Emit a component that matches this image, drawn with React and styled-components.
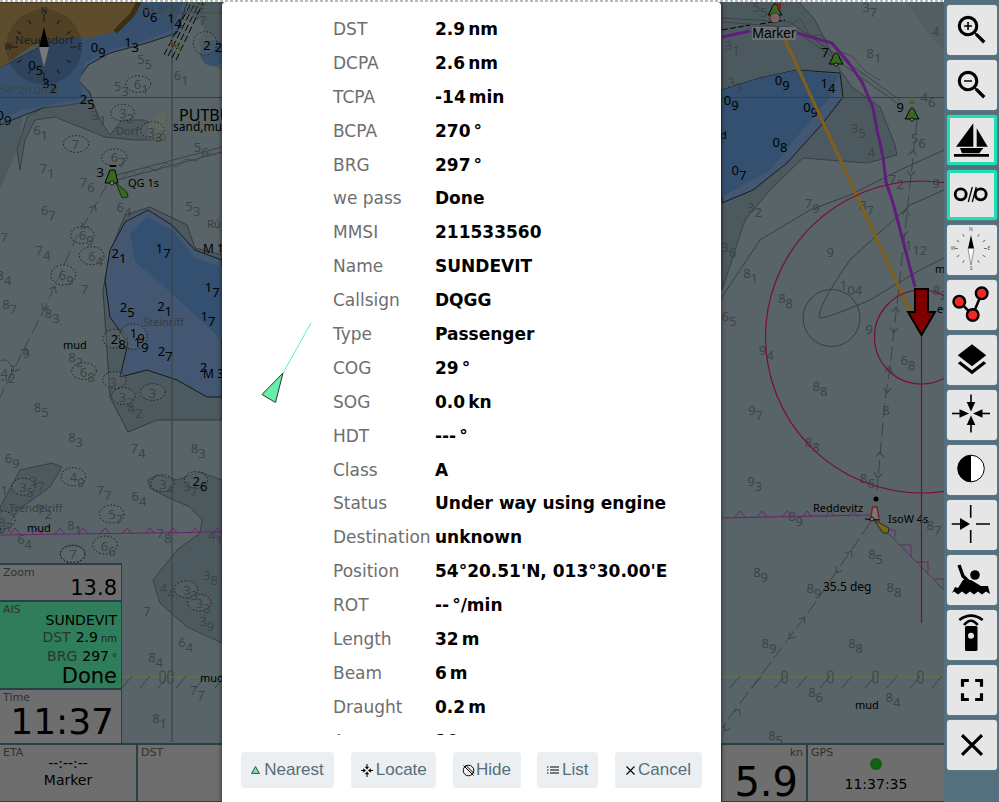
import React from 'react';
import styled, { createGlobalStyle } from 'styled-components';
import { MdZoomIn, MdZoomOut, MdLayers, MdFullscreen, MdClose } from 'react-icons/md';

const Global = createGlobalStyle`
  html, body { margin: 0; padding: 0; background: #54707f; overflow: hidden; }
  #root { width: 999px; height: 802px; }
`;

const Page = styled.div`
  width: 999px; height: 802px; display: flex; overflow: hidden;
  font-family: "DejaVu Sans", sans-serif;
`;
const MapArea = styled.div`
  position: relative; width: 944px; height: 802px; flex: none;
  display: flex; flex-direction: column; justify-content: flex-end; overflow: hidden;
`;
const ChartSvg = styled.svg`
  position: absolute; inset: 0; width: 944px; height: 802px;
  background: #b0c8ce;
`;
const TopStrip = styled.div`
  position: absolute; left: 0; right: 0; top: 0; height: 2px;
  background: repeating-linear-gradient(90deg, #bbb 0 3px, #fff 3px 5px);
  z-index: 3;
`;
const Widgets = styled.div`
  position: relative; display: flex; flex-direction: column; align-items: flex-start;
`;
const LeftStack = styled.div`
  width: 122px; box-sizing: border-box; padding: 2px 1px 0 0; background: #587c90;
  display: flex; flex-direction: column; gap: 2px;
`;
const Widget = styled.div`
  position: relative; box-sizing: border-box; height: ${p => p.$h}px;
  background: ${p => p.$ais ? '#5ffab4' : '#dcdcdc'}; color: #000;
  display: flex; flex-direction: column; align-items: flex-end; padding: 0 4px 0 3px;
  overflow: hidden;
`;
const Caption = styled.div`
  align-self: ${p => p.$right ? 'flex-end' : 'flex-start'}; font-size: 11px; line-height: 13px; color: #5e6666; padding-top: 1px; flex: none;
`;
const BigValue = styled.div`
  font-size: ${p => p.$size}px; line-height: ${p => p.$lh || p.$size}px; white-space: nowrap; flex: none;
  padding-right: ${p => p.$pr || 0}px; margin-top: ${p => p.$mt || 0}px;
`;
const AisName = styled.div`font-size: 14px; line-height: 18px; margin-top: -5px; flex: none;`;
const AisLine = styled.div`font-size: 14px; line-height: 17.5px; color: #4f6e60; white-space: nowrap; flex: none;`;
const AisValue = styled.span`color: #000; margin-left: 5px;`;
const AisUnit = styled.span`font-size: 10px; margin-left: 3px; color: #3d4a45;`;
const BottomBar = styled.div`
  display: flex; width: 944px; height: 59px; box-sizing: border-box; gap: 2px;
  padding: 2px 0 1px 0; background: #587c90;
`;
const BarCell = styled.div`
  position: relative; width: ${p => p.$w}px; flex: ${p => p.$grow ? 1 : 'none'}; box-sizing: border-box;
  background: #dcdcdc; color: #000; display: flex; flex-direction: column;
  align-items: ${p => p.$end ? 'flex-end' : 'center'}; padding: 0 3px;
  overflow: hidden;
`;
const CellText = styled.div`font-size: 14px; line-height: 17px; white-space: nowrap; flex: none; margin-top: ${p => p.$mt || 0}px;`;
const GpsDot = styled.div`
  width: 12px; height: 12px; border-radius: 50%; margin: -1px 0 6px; flex: none;
  background: radial-gradient(circle, #1dc62d 0 40%, #16a322 100%);
`;
const Dim = styled.div`
  position: absolute; inset: 0; background: rgba(0,0,0,.5); z-index: 2;
  display: flex; justify-content: center; align-items: flex-end;
`;
const Dialog = styled.div`
  width: 499px; height: 800px; margin-right: 1px; background: #fff; border-radius: 4px 4px 0 0;
  box-shadow: 0 0 5px rgba(0,0,0,.6); display: flex; flex-direction: column;
  font-family: "DejaVu Sans", sans-serif;
`;
const DialogBody = styled.div`
  flex: 1; min-height: 0; overflow: hidden; display: flex; align-items: flex-start; padding-top: 11px;
`;
const ShipIcon = styled.svg`
  flex: none; width: 60px; height: 90px; margin: 308px 16px 0 35px;
`;
const Rows = styled.div`
  display: grid; grid-template-columns: 102px 1fr; grid-auto-rows: 33.9px; align-items: center;
  font-size: 17px; line-height: 33.9px; flex: 1;
`;
const Label = styled.div`color: #6e6e6e; white-space: nowrap;`;
const Value = styled.div`color: #000; font-weight: 700; white-space: nowrap;`;
const Unit = styled.span`margin-left: 3px;`;
const Footer = styled.div`
  flex: none; height: 67px; box-sizing: border-box; padding: 17px 19px 14px; background: #fff;
  display: flex; justify-content: space-between;
`;
const DlgButton = styled.button`
  border: 0; width: ${p => p.$w}px; height: 36px; background: #eceff1; border-radius: 4px; color: #546e7a;
  font: 17px "Liberation Sans", sans-serif; display: flex; align-items: center; justify-content: center;
  padding: 0; gap: ${p => p.$gap ?? 2}px;
`;
const Toolbar = styled.div`
  flex: 1; background: #54707f; display: flex; flex-direction: column; gap: 5px; padding: 5px 2px 0 3px;
`;
const ToolButton = styled.div`
  width: 50px; height: 50px; box-sizing: border-box; flex: none; background: #e6e6e6; border-radius: 3px;
  border: ${p => p.$active ? '3px solid #1ee0b2' : '0'};
  display: flex; align-items: center; justify-content: center; color: #000;
  box-shadow: 0 0 1px rgba(255,255,255,.5);
  & > svg { flex: none; }
`;

/* ---------- chart data: zoomed-crop coordinates, grouped by crop offset ---------- */
const groups = [
  [0, 0, [[438,35,'06',1],[512,55,'14',1],[585,45,'47'],[283,140,'09',1],[383,125,'13',1],[422,178,'55'],[95,195,'05',1],[137,248,'32',1],[250,298,'25',1],[352,257,'53'],[412,252,'61'],[532,225,'61'],[0,345,'09',1],[285,345,'31'],[368,340,'32'],[453,395,'33'],[110,390,'61'],[225,432,'7'],[130,505,'71'],[343,472,'67'],[250,545,'76'],[592,440,'56'],[133,630,'67'],[360,622,'64'],[567,618,'53'],[12,710,'7'],[117,750,'74'],[247,705,'69'],[275,767,'64'],[345,760,'21',1],[478,745,'17',1],[187,825,'69'],[0,825,'84'],[620,135,'2',1],[655,140,'2',1],[300,515,'3',1]]],
  [0, 280, [[17,72,'87'],[253,27,'7'],[145,100,'83'],[78,218,'9'],[12,280,'42'],[370,80,'25',1],[482,78,'21',1],[625,22,'17',1],[612,108,'17',1],[400,158,'19',1],[412,185,'19',1],[343,178,'28',1],[484,212,'27',1],[610,260,'2',1],[215,232,'82'],[250,275,'68'],[338,305,'3'],[367,350,'32'],[393,385,'42'],[457,338,'3'],[112,380,'85'],[215,470,'83'],[402,505,'74'],[583,505,'83'],[25,533,'69'],[100,602,'37'],[68,622,'35'],[12,630,'1'],[220,592,'49'],[300,630,'77'],[405,647,'64'],[488,612,'34'],[560,618,'37'],[588,602,'26',1],[122,688,'72'],[335,703,'57'],[5,725,'37'],[212,735,'81'],[480,760,'78'],[62,777,'64'],[313,798,'66'],[635,765,'41']]],
  [0, 550, [[490,115,'44'],[560,120,'33'],[598,160,'33'],[620,75,'38'],[440,182,'7'],[608,212,'39'],[545,275,'64'],[455,322,'84'],[580,420,'77'],[467,505,'81'],[218,12,'7']]],
  [720, 0, [[108,20,'55'],[437,20,'37'],[647,92,'4'],[25,135,'31'],[315,155,'7',1],[450,160,'81'],[33,245,'33'],[175,240,'09',1],[312,250,'14',1],[22,300,'09',1],[260,320,'09',1],[540,322,'9',1],[612,290,'46'],[403,385,'35'],[583,415,'56'],[168,425,'08',1],[45,510,'07',1],[453,455,'4'],[517,538,'72'],[647,548,'9'],[92,622,'32'],[265,608,'79'],[428,615,'87'],[15,742,'36'],[330,757,'9'],[565,735,'112'],[80,820,'81'],[370,855,'104'],[185,893,'88'],[648,870,'82'],[15,948,'65'],[447,988,'9'],[127,1050,'94'],[552,1080,'68'],[288,1158,'88']]],
  [720, 400, [[95,30,'97'],[497,30,'8'],[265,125,'88'],[430,235,'86'],[92,242,'93'],[630,375,'87'],[455,462,'85'],[110,515,'89'],[270,565,'89'],[510,562,'88'],[135,730,'89'],[395,730,'88'],[275,875,'86'],[507,890,'84'],[155,1005,'85'],[215,347,'89']]],
];
const soundings = groups.flatMap(([ox, oy, list]) =>
  list.map(([zx, zy, txt, dark]) => ({ x: ox + zx / 3, y: oy + zy / 3 + 5, txt, dark })));

const wrecks = [
  [0,0,415,252,37,25],[0,0,368,338,35,25],[0,0,457,390,35,25],[0,0,228,432,38,25],[0,0,343,472,38,25],[0,0,247,705,35,25],[0,0,275,767,37,27],[0,0,190,825,37,30],[0,0,615,130,35,35],
  [0,280,252,273,37,25],[0,280,345,176,37,28],[0,280,400,170,42,38],[0,280,343,300,35,25],[0,280,370,348,35,25],[0,280,458,336,37,25],[0,280,70,620,35,25],[0,280,220,590,37,27],[0,280,488,610,35,25],[0,280,588,600,35,25],[0,280,335,702,37,27],[0,280,315,795,37,27],[0,280,218,822,37,27],[0,280,10,270,25,30],[0,280,5,720,40,27],
  [0,550,558,118,35,25],[0,550,598,158,35,25],[0,550,218,12,37,25],
].map(([ox, oy, zx, zy, rx, ry]) => ({ cx: ox + zx / 3, cy: oy + zy / 3, rx: rx / 3, ry: ry / 3 }));

const labels = [
  [15,44,'Neuendorf',11.5,'#4c4c4c'],[179,121,'PUTBUS',16,'#000'],[173,131,'sand,mud',12,'#000'],[116,135,'Dorf',11,'#707c80'],
  [207,228,'Rügen',11,'#707c80'],[203,253,'M 1',12,'#000'],[143,326,'Steinriff',11,'#6a7c88'],[63,349,'mud',11,'#000'],
  [203,378,'M 3',12,'#000'],[9,512,'Trendelriff',11,'#707c80'],[27,532,'mud',11,'#000'],[200,682,'mud',11,'#000'],
  [128,187,'QG 1s',11,'#000'],[720,139,'d',11,'#000'],[935,273,'m',11,'#000'],[937,313,'eg',11,'#000'],[813,512,'Reddevitz',11,'#000'],
  [888,523,'IsoW 4s',11,'#000'],[823,591,'35.5 deg',12,'#000'],[855,709,'mud',11,'#000'],
  [0,94,"54°20.00'N",11.5,'#7a8a90'],[143,13,"013°30.00'E",11.5,'#7a8a90'],
];

/* double-headed fairway arrows: x, y, direction in degrees */
const fairArrows = [
  [89,217,28],[49,298,28],[20,360,28],[912,163,6],[905,223,6],[895,320,6],[888,380,6],[879,465,5],[844,562,35],[797,628,35],[732,720,35],
];

const Bell = ({ x, y, s = 1 }) => (
  <g transform={`translate(${x} ${y}) scale(${s})`}>
    <path d="M0-9C2-9 3-6 4-3L7 2H-7L-4-3C-3-6-2-9 0-9Z" fill="#70d040" stroke="#000" strokeWidth="1" />
    <circle cy="2.5" r="1.6" fill="#fff" stroke="#000" strokeWidth=".8" />
  </g>
);

const tri = (x, y) => `M${x} ${y}l5 -6l5 6`;

const Chart = () => (
  <ChartSvg viewBox="0 0 944 802" aria-hidden="true">
    {/* north-west: land and water */}
    <path d="M0 125L24 112L17 150L0 190Z" fill="#98b4be" />
    <path d="M0 68V125L17 118L43 108L70 107L92 100L90 93L78 80L88 65L110 53L147 43L177 33L188 0H130Z" fill="#86aee4" stroke="#3a444a" strokeWidth="1" />
    <path d="M0 68V118L24 110L43 106L70 101L84 98L80 80L86 62L110 50L147 40L172 30L184 0H130Z" fill="#6ea0dc" />
    <path d="M0 0H140L132 15L115 32L93 37L67 38L33 45L0 68Z" fill="#bc9a58" />
    <path d="M0 0H140L132 15L115 32" fill="none" stroke="#7a5c28" strokeWidth="5" />
    <path d="M17 150L27 117L43 108L70 105L92 100L100 120L110 135L122 120L145 120L165 135V140H135L105 137L80 127L55 117L35 120L25 140L20 170Z" fill="#98b4be" stroke="#60707a" strokeWidth=".8" />
    <path d="M148 125L165 110V140H148Z" fill="#d4d4b0" opacity=".6" />
    <path d="M190 0L222 0V70L204 62L198 40L205 32Z" fill="#98b4be" />
    <circle cx="213" cy="53" r="13" fill="#6ea0dc" />
    {/* central water body */}
    <path d="M105 280L115 240L125 215L150 207L187 225L195 248L222 255V420H157L128 432L110 397L103 290Z" fill="#98b4be" stroke="#50606a" strokeWidth=".8" />
    <path d="M105 280L110 250L125 222L148 210L172 225L195 250L222 260V397L207 397L177 380L147 370L120 377L128 343L110 317Z" fill="#86aee4" stroke="#2c3236" strokeWidth="1" />
    <path d="M130 233L147 217L173 230L195 258L222 267V340L157 280L135 262Z" fill="#66a0e0" />
    {/* shallow patches bottom left */}
    <path d="M0 507L20 470L52 463L62 467L50 487L18 510L3 533H0Z" fill="#98b4be" stroke="#60707a" strokeWidth=".8" />
    <path d="M148 480L157 475L177 480L200 472L222 480V643L187 627L160 603L153 580L177 550L200 533L202 520L190 507L167 497L150 488Z" fill="#98b4be" stroke="#60707a" strokeWidth=".8" />
    {/* east side */}
    <path d="M722 0H797L815 20L840 70L852 87L880 107L895 145L897 155L867 163L803 158L770 190L745 220L722 290Z" fill="#98b4be" stroke="#60707a" strokeWidth=".8" />
    <path d="M905 0H944V50L925 30Z" fill="#a4bcc6" />
    <path d="M722 90L760 78L797 70L840 73L843 97L823 123L787 163L753 190L722 203Z" fill="#86aee4" stroke="#2c3236" strokeWidth="1" />
    <path d="M722 90L760 78L797 70L838 75L830 97L800 133L770 170L722 197Z" fill="#66a0e0" />
    {/* grid lines */}
    <path d="M172 0V742M0 97.5H222M722 97.5H944" stroke="#6e7e84" strokeWidth="1" fill="none" />
    <rect x="152" y="3" width="70" height="10" fill="none" stroke="#68b068" strokeWidth=".8" />
    {/* contour and depth rings */}
    <path d="M720 300L760 240L810 210L850 195L900 170L944 150M820 318Q828 318 870 300L920 270L944 258M820 318Q815 310 850 260L880 232L910 205L944 190" fill="none" stroke="#6c7c80" strokeWidth="1" />
    <circle cx="831.5" cy="318" r="28.5" fill="none" stroke="#6c7c80" strokeWidth="1" />
    <path d="M722 18L790 22L900 100M722 22L790 27L900 105M117 175L222 147M117 180L222 152" fill="none" stroke="#7a8488" strokeWidth="1" />
    <path d="M122 178L130 171L138 175L148 167L156 171L166 163L176 167L186 159L196 161L206 153L216 155" fill="none" stroke="#7a8488" strokeWidth=".8" />
    <path d="M790 25L800 18L810 36L822 35L836 50L852 56L866 72L880 80" fill="none" stroke="#7a8488" strokeWidth=".8" />
    <path d="M722 30L750 25M760 24L785 20" fill="none" stroke="#000" strokeWidth="1" strokeDasharray="6 2" />
    <path d="M168 56L195 3M172 58L199 3M176 60L203 3M164 55L191 3" fill="none" stroke="#000" strokeWidth="1" strokeDasharray="7 3" />
    <path d="M170 43L181 49" stroke="#70d040" strokeWidth="2.5" /><path d="M170 43L176 46" stroke="#ff4040" strokeWidth="1.5" />
    {/* fairways */}
    <g fill="none" stroke="#76868c" strokeWidth="1">
      <path d="M107 185L75 240L65 263L43 312L27 343L7 383L0 397" strokeDasharray="14 5" />
      <path d="M917 120L912 167L900 277L890 367L885 400L877 490" strokeDasharray="14 5" />
      <path d="M870 523L810 610L740 703L722 728" strokeDasharray="14 5" />
      {fairArrows.map(([x, y, a], i) => (
        <path key={i} transform={`translate(${x} ${y}) rotate(${a})`} d="M-4-8L0-13L4-8M-4 8L0 13L4 8" />
      ))}
    </g>
    {/* magenta restricted lines */}
    <path d="M0 535L222 532M722 518L870 515" stroke="#d050d0" strokeWidth="1.2" fill="none" />
    {[10, 32, 55, 78, 100, 122, 145, 168, 190, 212].map(x => <path key={x} d={tri(x, 534)} fill="none" stroke="#d050d0" strokeWidth="1" />)}
    {[735, 757, 782, 802, 825, 848].map(x => <path key={x} d={tri(x, 517)} fill="none" stroke="#d050d0" strokeWidth="1" />)}
    <path d="M882 527L944 590" stroke="#76868c" fill="none" />
    <path d="M888 530H895V538M900 545H911V557M916 562H928V572M935 579H944V588" stroke="#d050d0" fill="none" />
    {/* green line with hatching */}
    <path d="M122 677H222M722 677H944" stroke="#b0e49c" strokeWidth="2" fill="none" />
    {[122, 140, 158, 176, 196, 215, 730, 752, 775, 797, 820, 842, 865, 887, 910, 932].map(x => <path key={x} d={`M${x} 688l10 -12`} stroke="#76868c" fill="none" />)}
    {[160, 168, 782, 828, 873, 918].map(x => <rect key={x} x={x} y="671" width="5" height="12" rx="2" fill="none" stroke="#76868c" />)}
    {/* soundings, seabed shapes and names */}
    {wrecks.map((w, i) => <ellipse key={i} {...w} fill="#c4d4d8" fillOpacity=".3" stroke="#333" strokeWidth="1" strokeDasharray="1.5 2" />)}
    <g fontFamily="'Noto Sans', sans-serif" fontSize="13">
      {soundings.map((s, i) => (
        <text key={i} x={s.x - 3.5} y={s.y} fill={s.dark ? '#000' : '#76888f'}>
          {s.txt[0]}{s.txt.length > 1 && <tspan dy="5">{s.txt.slice(1)}</tspan>}
        </text>
      ))}
      {labels.map(([x, y, t, size, c], i) => <text key={i} x={x} y={y} fontSize={size} fill={c}>{t}</text>)}
    </g>
    {/* compass */}
    <circle cx="44" cy="47" r="38" fill="#000" fillOpacity=".15" />
    <g stroke="#333" strokeWidth="1">
      {[30, 60, 120, 150, 210, 240, 300, 330].map(a => <line key={a} x1="44" y1="16" x2="44" y2="21" transform={`rotate(${a} 44 47)`} />)}
      <line x1="44" y1="14" x2="44" y2="22" /><line x1="44" y1="72" x2="44" y2="80" /><line x1="10" y1="47" x2="18" y2="47" /><line x1="70" y1="47" x2="77" y2="47" />
    </g>
    <path d="M44 27L49 47H39Z" fill="#000" /><path d="M39 47H49L44 67Z" fill="#f0f0f0" />
    <g fontFamily="'Noto Sans', sans-serif" fontSize="8" fill="#333" textAnchor="middle">
      <text x="44" y="14">N</text><text x="80" y="50">E</text><text x="8" y="50">W</text><text x="45" y="85">S</text>
    </g>
    {/* beacons */}
    <path d="M110 166H116" stroke="#000" strokeWidth="2" />
    <path d="M105 183L110 170H115L118 183Z" stroke="#000" strokeWidth="1" fill="#70d040" />
    <path d="M116 183L127 192L128 197L122 198Z" fill="#70d040" stroke="#333" strokeWidth=".8" />
    <circle cx="112" cy="183" r="2" fill="#fff" stroke="#000" strokeWidth=".8" />
    <Bell x={836} y={62} /><Bell x={912} y={117} />
    <path d="M912 99L915 104H909Z" fill="#70d040" />
    <Bell x={775} y={13} s={1} />
    <rect x="777" y="3" width="4" height="6" fill="#ff4040" />
    <circle cx="775" cy="18" r="5" fill="#ffc0c0" stroke="#555" strokeWidth=".8" />
    <circle cx="876" cy="499" r="2.5" fill="#000" />
    <path d="M870 522L872.5 507H877L879 518" fill="#f0f0f0" stroke="#ff4040" strokeWidth="1.5" />
    <path d="M865 519L880 520" stroke="#000" strokeWidth="1" />
    <path d="M874 520L889 528L888 533L883 533Z" fill="#f2d030" stroke="#333" strokeWidth=".8" />
    <circle cx="872" cy="519" r="2" fill="#fff" stroke="#000" strokeWidth=".8" />
    {/* route, course and range rings */}
    <path d="M722 37L750 31M797 33L832 43L848 62L862 82L873 108L877 130L883 157L886 182L893 203L902 237L915 287" fill="none" stroke="#c03cf8" strokeWidth="3" />
    <path d="M785 40L921 335" fill="none" stroke="#ffbe32" strokeWidth="3" />
    <circle cx="921.5" cy="337" r="47" fill="none" stroke="#f01e5a" strokeWidth="1.2" />
    <circle cx="921.5" cy="337" r="156" fill="none" stroke="#f01e5a" strokeWidth="1.2" />
    <path d="M921.5 337V623" stroke="#f01e5a" strokeWidth="1.2" fill="none" />
    <path d="M915 289H928V312H935L921.5 335L908 312H915Z" fill="#ff0000" stroke="#000" strokeWidth="2" />
    <rect x="752" y="27" width="44" height="13" fill="#fff" fillOpacity=".6" />
    <text x="774" y="38" fontFamily="'Liberation Sans', sans-serif" fontSize="14" fill="#000" textAnchor="middle">Marker</text>
  </ChartSvg>
);

/* ---------- toolbar icons ---------- */
const Boat = () => (
  <svg width="44" height="44" viewBox="3 3 44 44">
    <path d="M26.3 8.3V31.7H9ZM29.7 13.3L40.7 31.7H29.7ZM13 33H36.3L32.3 38.3H15ZM7 39H42V41.7H7Z" fill="#000" />
  </svg>
);
const Glasses = () => (
  <svg width="44" height="44" viewBox="3 3 44 44" fill="none" stroke="#000">
    <circle cx="13.7" cy="24.3" r="5.5" strokeWidth="2.8" /><circle cx="33.7" cy="24.3" r="5.5" strokeWidth="2.8" />
    <path d="M21.3 32L25.3 17M25.3 32L29.3 17" strokeWidth="1.3" />
  </svg>
);
const Rose = () => (
  <svg width="50" height="50" viewBox="0 0 50 50">
    <g stroke="#555" strokeWidth=".8">
      {[30, 60, 120, 150, 210, 240, 300, 330].map(a => <line key={a} x1="24" y1="7" x2="24" y2="10" transform={`rotate(${a} 24 23.5)`} />)}
      <line x1="8" y1="23.5" x2="11" y2="23.5" /><line x1="37" y1="23.5" x2="40" y2="23.5" />
    </g>
    <path d="M24 10L27 23.5H21Z" fill="#000" /><path d="M21 23.5H27L24 40Z" fill="#fff" stroke="#555" strokeWidth=".6" />
    <g fontFamily="'Noto Sans', sans-serif" fontSize="5" fill="#555" textAnchor="middle">
      <text x="24" y="6">N</text><text x="42" y="25">E</text><text x="6" y="25">W</text><text x="24" y="45">S</text>
    </g>
  </svg>
);
const RouteIcon = () => (
  <svg width="50" height="50" viewBox="0 0 50 50">
    <path d="M12.3 21.7L25.7 35L34.7 13.3" fill="none" stroke="#000" strokeWidth="2.5" />
    {[[12.3, 21.7], [25.7, 35], [34.7, 13.3]].map(([x, y]) => <circle key={x} cx={x} cy={y} r="5.8" fill="#f62626" stroke="#000" strokeWidth="2.4" />)}
  </svg>
);
const Target = () => (
  <svg width="50" height="50" viewBox="0 0 50 50">
    {[0, 90, 180, 270].map(a => (
      <g key={a} transform={`rotate(${a} 24 23.5)`}>
        <path d="M24 4.5V12.5" stroke="#000" strokeWidth="1.6" /><path d="M19.7 12H28.3L24 21.5Z" fill="#000" />
      </g>
    ))}
  </svg>
);
const Contrast = () => (
  <svg width="50" height="50" viewBox="0 0 50 50">
    <circle cx="24" cy="23.5" r="13.3" fill="#fff" stroke="#000" strokeWidth="1" />
    <path d="M24 10.2A13.3 13.3 0 0 0 24 36.8Z" fill="#000" />
  </svg>
);
const Lock = () => (
  <svg width="50" height="50" viewBox="0 0 50 50">
    <path d="M23.7 5V17.7M23.7 30V43M29 24H43M4.7 24H13" stroke="#000" strokeWidth="1.6" fill="none" />
    <path d="M13 18V30L23 24Z" fill="#000" />
  </svg>
);
const Mob = () => (
  <svg width="50" height="50" viewBox="0 0 50 50">
    <circle cx="28" cy="20" r="4.8" fill="#000" />
    <path d="M12 10L16 21L24 29" fill="none" stroke="#000" strokeWidth="3.4" />
    <path d="M16 25L24 25L34 31L41 31L43 39L39 36.5L35 39.5L31 36.5L27 39.5L23 36.5L19 39.5L15 36.5L11 39.5L7 36.5L5 38L8 32L11 33Z" fill="#000" />
  </svg>
);
const Remote = () => (
  <svg width="50" height="50" viewBox="0 0 50 50">
    <rect x="18" y="16" width="12.5" height="25" rx="1.5" fill="#000" />
    <circle cx="24" cy="25.7" r="3" fill="#e6e6e6" />
    <path d="M12.3 10Q24 1.4 35.7 10M17 15Q24 6.4 30.7 15" fill="none" stroke="#000" strokeWidth="2.6" />
  </svg>
);

/* ---------- dialog button icons ---------- */
const NearestIcon = () => <svg width="9" height="8" viewBox="0 0 9 8"><path d="M4.5 .6L8.4 7.4H.6Z" fill="#64f0a8" stroke="#333" strokeWidth=".9" /></svg>;
const LocateIcon = () => (
  <svg width="14" height="13" viewBox="0 0 14 13"><path d="M7 0V3M7 10V13M1 6.5H4M10 6.5H13" stroke="#000" /><path d="M7 5.5L4.8 2.8H9.2ZM7 7.5L4.8 10.2H9.2ZM6 6.5L3.2 4.3V8.7ZM8 6.5L10.8 4.3V8.7Z" fill="#000" /></svg>
);
const HideIcon = () => (
  <svg width="13" height="13" viewBox="0 0 13 13" fill="none" stroke="#000" strokeWidth="1"><circle cx="6.5" cy="6.5" r="5.3" /><path d="M1.5 1.5L11.5 11.5M3.5 1L12 9.5" /></svg>
);
const ListIcon = () => <svg width="12" height="8" viewBox="0 0 12 8"><path d="M0 1H1.5M3 1H12M0 4H1.5M3 4H12M0 7H1.5M3 7H12" stroke="#000" strokeWidth="1.2" /></svg>;
const CancelIcon = () => <svg width="9" height="9" viewBox="0 0 9 9"><path d="M.5 .5L8.5 8.5M8.5 .5L.5 8.5" stroke="#000" strokeWidth="1.1" /></svg>;

const rows = [
  ['DST', '2.9', 'nm'], ['DCPA', '2.6', 'nm'], ['TCPA', '-14', 'min'], ['BCPA', '270', '°'], ['BRG', '297', '°'],
  ['we pass', 'Done'], ['MMSI', '211533560'], ['Name', 'SUNDEVIT'], ['Callsign', 'DQGG'], ['Type', 'Passenger'],
  ['COG', '29', '°'], ['SOG', '0.0', 'kn'], ['HDT', '---', '°'], ['Class', 'A'], ['Status', 'Under way using engine'],
  ['Destination', 'unknown'], ['Position', "54°20.51'N, 013°30.00'E"], ['ROT', '--', '°/min'], ['Length', '32', 'm'],
  ['Beam', '6', 'm'], ['Draught', '0.2', 'm'], ['Age', '10', 's'],
];

const tools = [
  [<MdZoomIn size={38} />], [<MdZoomOut size={38} />], [<Boat />, true], [<Glasses />, true], [<Rose />], [<RouteIcon />],
  [<MdLayers size={38} />], [<Target />], [<Contrast />], [<Lock />], [<Mob />], [<Remote />], [<MdFullscreen size={38} />], [<MdClose size={38} />],
];

export default function App() {
  return (
    <Page>
      <Global />
      <MapArea>
        <Chart />
        <TopStrip />
        <Widgets>
          <LeftStack>
            <Widget $h={35}>
              <Caption>Zoom</Caption>
              <BigValue $size={21} $lh={21} $mt={-1}>13.8</BigValue>
            </Widget>
            <Widget $h={86} $ais>
              <Caption>AIS</Caption>
              <AisName>SUNDEVIT</AisName>
              <AisLine>DST<AisValue>2.9</AisValue><AisUnit>nm</AisUnit></AisLine>
              <AisLine>BRG<AisValue>297</AisValue><AisUnit>°</AisUnit></AisLine>
              <BigValue $size={21} $lh={21}>Done</BigValue>
            </Widget>
            <Widget $h={53}>
              <Caption>Time</Caption>
              <BigValue $size={36} $lh={36} $pr={3}>11:37</BigValue>
            </Widget>
          </LeftStack>
          <BottomBar>
            <BarCell $w={136}>
              <Caption>ETA</Caption>
              <CellText $mt={-4}>--:--:--</CellText>
              <CellText>Marker</CellText>
            </BarCell>
            <BarCell $grow>
              <Caption>DST</Caption>
            </BarCell>
            <BarCell $w={84} $end>
              <Caption $right>kn</Caption>
              <BigValue $size={40} $lh={40} $pr={5} $mt={3}>5.9</BigValue>
            </BarCell>
            <BarCell $w={136}>
              <Caption>GPS</Caption>
              <GpsDot />
              <CellText>11:37:35</CellText>
            </BarCell>
          </BottomBar>
        </Widgets>
        <Dim>
          <Dialog>
            <DialogBody>
              <ShipIcon viewBox="0 0 60 90">
                <path d="M54 2L26 52" stroke="#64f0a8" strokeWidth="1" />
                <path d="M26 52L5 73.5L18.5 81.5Z" fill="#64f0a8" stroke="#333" strokeWidth="1" />
              </ShipIcon>
              <Rows>
                {rows.map(([l, v, u]) => (
                  <React.Fragment key={l}>
                    <Label>{l}</Label>
                    <Value>{v}{u && <Unit>{u}</Unit>}</Value>
                  </React.Fragment>
                ))}
              </Rows>
            </DialogBody>
            <Footer>
              <DlgButton $w={93} $gap={4}><NearestIcon />Nearest</DlgButton>
              <DlgButton $w={85}><LocateIcon />Locate</DlgButton>
              <DlgButton $w={68} $gap={1}><HideIcon />Hide</DlgButton>
              <DlgButton $w={61} $gap={3}><ListIcon />List</DlgButton>
              <DlgButton $w={87} $gap={3}><CancelIcon />Cancel</DlgButton>
            </Footer>
          </Dialog>
        </Dim>
      </MapArea>
      <Toolbar>
        {tools.map(([icon, active], i) => <ToolButton key={i} $active={active}>{icon}</ToolButton>)}
      </Toolbar>
    </Page>
  );
}
